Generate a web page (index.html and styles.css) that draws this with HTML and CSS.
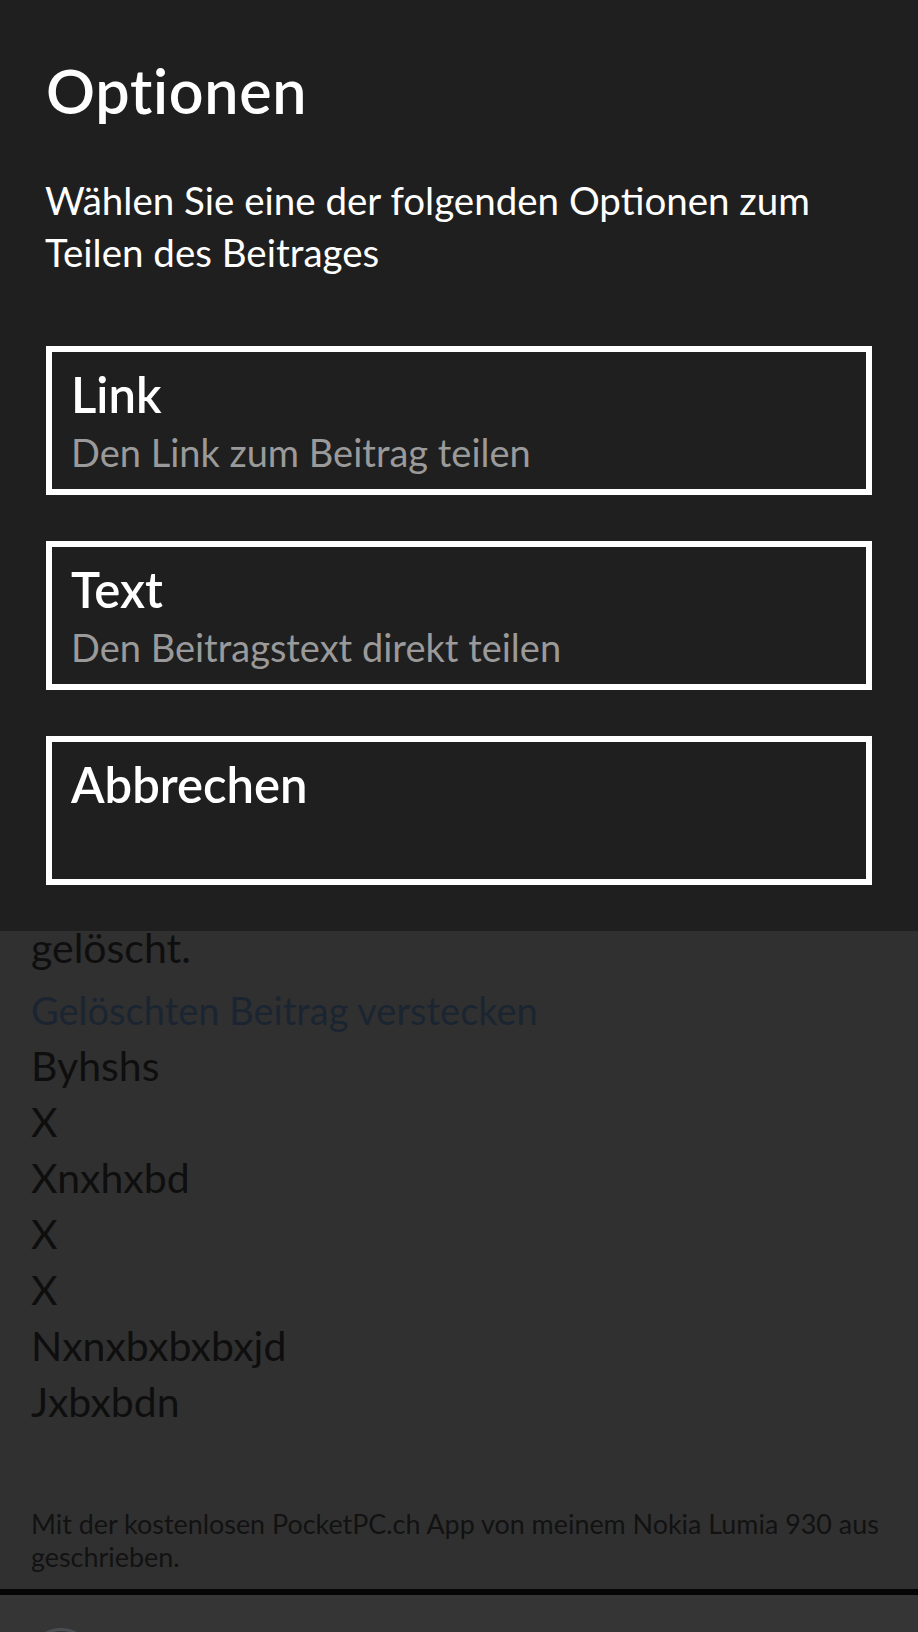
FILE: index.html
```html
<!DOCTYPE html>
<html>
  <head>
    <meta charset="UTF-8">
    <meta name="viewport" content="width=device-width, initial-scale=1.0">
    <title>Optionen</title>
    <link rel="stylesheet" href="styles.css">
  </head>
  <body>
    <!-- Post in the background, dimmed by the popup -->
    <div class="post">
      <p class="post-line">gelöscht.</p>
      <a class="post-link" href="#">Gelöschten Beitrag verstecken</a>
      <p class="post-line">Byhshs</p>
      <p class="post-line">X</p>
      <p class="post-line">Xnxhxbd</p>
      <p class="post-line">X</p>
      <p class="post-line">X</p>
      <p class="post-line">Nxnxbxbxbxjd</p>
      <p class="post-line">Jxbxbdn</p>
      <p class="signature">Mit der kostenlosen PocketPC.ch App von meinem Nokia Lumia 930 aus geschrieben.</p>
    </div>
    <div class="next-post">
      <div class="avatar"></div>
      <div class="avatar small"></div>
    </div>

    <!-- Share options popup -->
    <div class="dialog">
      <h1>Optionen</h1>
      <p class="dialog-text">Wählen Sie eine der folgenden Optionen zum Teilen des Beitrages</p>

      <div class="option">
        <div class="option-title">Link</div>
        <div class="option-sub">Den Link zum Beitrag teilen</div>
      </div>

      <div class="option">
        <div class="option-title">Text</div>
        <div class="option-sub">Den Beitragstext direkt teilen</div>
      </div>

      <div class="option">
        <div class="option-title">Abbrechen</div>
      </div>
    </div>
  </body>
</html>
```

FILE: styles.css
```css
* {
  box-sizing: border-box;
  margin: 0;
  padding: 0;
}

body {
  font-family: Lato, "Open Sans", sans-serif;
  background-color: #303030;
  height: 1632px;
  overflow: hidden;
  position: relative;
}

/* background post */
.post {
  padding: 920px 32px 0 31px;
  height: 1595px;
  border-bottom: 6px solid #050505;
}

.post-line {
  font-size: 41px;
  line-height: 56px;
  color: #0e0e0e;
}

.post-link {
  display: block;
  margin-top: 6px;
  font-size: 38px;
  line-height: 56px;
  color: #1b2531;
  text-decoration: none;
}

.signature {
  margin-top: 77px;
  font-size: 26.9px;
  line-height: 33px;
  color: #121212;
}

.next-post {
  background-color: #353535;
  height: 37px;
  padding: 33px 0 0 28px;
  display: flex;
  gap: 14px;
}

.avatar {
  width: 66px;
  height: 66px;
  border-radius: 50%;
  border: 3px solid #4a4d52;
  flex: none;
}

.avatar.small {
  width: 52px;
  height: 52px;
  margin-top: 4px;
  border-color: #444;
}

/* popup */
.dialog {
  position: absolute;
  top: 0;
  left: 0;
  right: 0;
  height: 931px;
  background-color: #1f1f1f;
  padding: 55px 46px 46px 46px;
  color: #fff;
}

.dialog h1 {
  font-size: 61px;
  font-weight: 600;
  line-height: 72px;
  letter-spacing: 0.7px;
}

.dialog-text {
  margin-top: 47px;
  font-size: 38.5px;
  line-height: 52px;
  margin-left: -1px;
}

.option {
  height: 149px;
  border: 6px solid #fff;
  padding: 14px 18px 0 19px;
  margin-top: 46px;
}

.dialog-text + .option {
  margin-top: 68px;
}

.option-title {
  font-size: 49px;
  font-weight: 600;
  line-height: 56px;
}

.option-sub {
  margin-top: 6px;
  font-size: 38px;
  line-height: 48px;
  color: #9a9a9a;
}
```
